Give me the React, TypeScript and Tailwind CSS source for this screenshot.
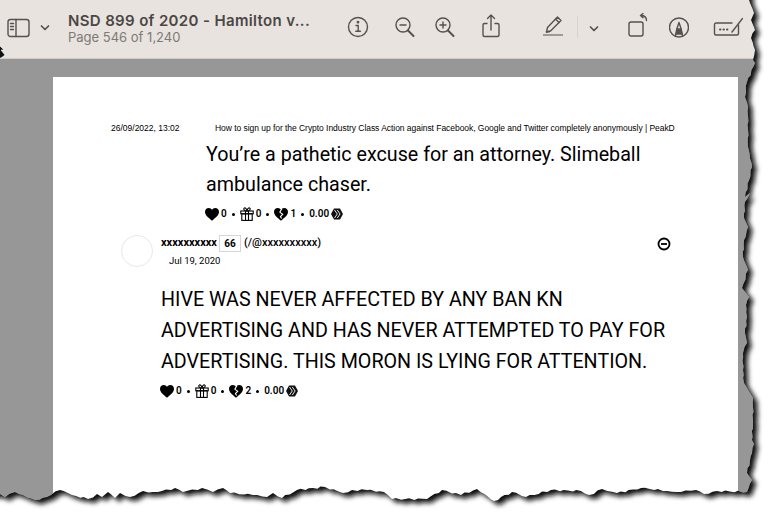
const TORN_EDGE = [
  [749, 0], [754, 13], [751, 20], [755, 30], [751, 38], [755, 50], [753, 60], [755, 63], [747, 82], [745, 97], [748, 107],
  [748, 130], [748, 147], [752, 167], [745, 197], [750, 193], [745, 202], [744, 218], [748, 227], [744, 240], [743, 257],
  [748, 270], [742, 288], [749, 297], [746, 305], [747, 317], [745, 333], [747, 343], [743, 353], [743, 370], [744, 383],
  [753, 398], [753, 420], [752, 440], [754, 444], [752, 453], [747, 473], [752, 480], [747, 492], [717, 491], [704, 494],
  [696, 490], [681, 492], [667, 491], [641, 488], [617, 493], [602, 489], [589, 495], [581, 491], [551, 490], [526, 497],
  [512, 492], [494, 501], [477, 489], [461, 495], [442, 490], [427, 499], [392, 499], [384, 492], [367, 490], [352, 490],
  [343, 493], [325, 487], [297, 490], [282, 498], [273, 493], [267, 497], [253, 495], [230, 493], [223, 488], [213, 492],
  [202, 488], [183, 492], [175, 488], [162, 491], [153, 492], [143, 491], [130, 497], [120, 493], [115, 498], [108, 492],
  [102, 497], [97, 494], [88, 499], [72, 495], [60, 490], [47, 497], [35, 500], [23, 495], [15, 492], [5, 497], [0, 494],
];

// break long segments up so the edge looks torn and not drawn with a ruler
function roughen(points: number[][]) {
  const out: string[] = [];
  points.forEach((p, i) => {
    const next = points[i + 1];
    out.push(`L${p[0]} ${p[1]}`);
    if (!next) return;
    const dist = Math.hypot(next[0] - p[0], next[1] - p[1]);
    const steps = Math.floor(dist / 4);
    for (let s = 1; s < steps; s++) {
      const t = s / steps;
      const wob = Math.sin((p[0] + p[1]) * 0.7 + s * 2.3) * 0.9;
      out.push(`L${(p[0] + (next[0] - p[0]) * t + wob * 0.6).toFixed(1)} ${(p[1] + (next[1] - p[1]) * t + wob).toFixed(1)}`);
    }
  });
  return out.join(" ");
}

const edgePath = `M-20 -20 L${TORN_EDGE[0][0]} -20 ${roughen(TORN_EDGE)} L-20 494 Z`;

function TornEdge() {
  return (
    <svg className="absolute inset-0 pointer-events-none" width="768" height="512" viewBox="0 0 768 512">
      <defs>
        <filter id="blur" x="-5%" y="-5%" width="110%" height="110%">
          <feGaussianBlur stdDeviation="2.5" />
        </filter>
        <clipPath id="outside">
          <path clipRule="evenodd" d={`M-20 -20 H800 V540 H-20 Z ${edgePath}`} />
        </clipPath>
      </defs>
      <path fillRule="evenodd" fill="#fff" d={`M-20 -20 H800 V540 H-20 Z ${edgePath}`} />
      <g clipPath="url(#outside)">
        <path d={edgePath} fill="#111" filter="url(#blur)" transform="translate(4.500 4)" />
      </g>
      <path d="M-2 44L4 50 1 50 5 55 1 58-2 58Z" fill="#111" stroke="#fff" strokeWidth=".6" />
    </svg>
  );
}

function ToolIcon({ w, className, children }: { w: number; className?: string; children: React.ReactNode }) {
  return (
    <svg
      width={w}
      height="28"
      viewBox={`0 0 ${w} 28`}
      fill="none"
      stroke="#55514f"
      strokeWidth="1.4"
      strokeLinecap="round"
      strokeLinejoin="round"
      className={className}
    >
      {children}
    </svg>
  );
}

function Toolbar() {
  return (
    <div className="h-[59px] pb-[4px] shrink-0 flex items-center bg-[#e8e3df] border-b border-[#cfcbc8]">
      <ToolIcon w={23} className="ml-[7px]">
        <rect x="1" y="6.500" width="21" height="17" rx="2.5" />
        <path d="M9 6.500v17M3.500 10.500h3M3.500 13.500h3M3.500 16.500h3" />
      </ToolIcon>
      <ToolIcon w={10} className="ml-[10px]">
        <path d="M1.500 13l3.500 3.500L8.500 13" strokeWidth="1.700" />
      </ToolIcon>
      <div className="ml-[18px] w-[270px] pt-[2px]">
        <div className="font-['Inter'] font-semibold text-[15px] leading-[18px] tracking-[0.35px] text-[#4a4745]">
          NSD 899 of 2020 - Hamilton v...
        </div>
        <div className="font-['Inter'] text-[13px] leading-[15px] text-[#7d7976]">Page 546 of 1,240</div>
      </div>
      <ToolIcon w={22} className="ml-[9px]">
        <circle cx="11" cy="14" r="9.5" />
        <path d="M9 12.500h2.200V18M8.800 18.300h4.600" />
        <circle cx="11" cy="9.200" r=".7" fill="#55514f" />
      </ToolIcon>
      <ToolIcon w={20} className="ml-[26px]">
        <circle cx="8" cy="12" r="7" />
        <path d="M13 17.500l5.500 5.500" strokeWidth="2" />
        <path d="M5 12h6" />
      </ToolIcon>
      <ToolIcon w={20} className="ml-[20px]">
        <circle cx="8" cy="12" r="7" />
        <path d="M13 17.500l5.500 5.500" strokeWidth="2" />
        <path d="M5 12h6M8 9v6" />
      </ToolIcon>
      <ToolIcon w={18} className="ml-[27px]">
        <path d="M5 10.500H2.500a1.500 1.500 0 0 0-1.500 1.500v10a1.500 1.500 0 0 0 1.500 1.500h13a1.500 1.500 0 0 0 1.500-1.500V12a1.500 1.500 0 0 0-1.500-1.500H13" />
        <path d="M9 17V2M5.500 5.500L9 2l3.500 3.500" />
      </ToolIcon>
      <ToolIcon w={20} className="ml-[43px]">
        <path d="M.5 22h19" strokeWidth="1.200" />
        <path d="M3.500 19l1-4.500L14.500 4l3.500 3.500L7.500 18z" />
        <path d="M12.500 6l3.500 3.500M3.500 19l3-.5" />
      </ToolIcon>
      <div className="ml-[14px] w-px h-[22px] bg-[#d6d2cf]" />
      <ToolIcon w={10} className="ml-[11px]">
        <path d="M1.500 14l3.500 3.500L8.500 14" strokeWidth="1.700" />
      </ToolIcon>
      <ToolIcon w={20} className="ml-[29px]">
        <rect x="1" y="9" width="14" height="14" rx="2" />
        <path d="M18.500 7.500C18.500 4.500 16.500 2.500 13 2.500M15 .5L12.500 2.500 15 4.800" />
      </ToolIcon>
      <ToolIcon w={20} className="ml-[21px]">
        <circle cx="10" cy="14.500" r="9.5" />
        <path d="M6.500 22.500l1.500-7 2-6 2 6 1.500 7" />
        <path d="M8 16h4l.8 5H7.200z" fill="#55514f" />
      </ToolIcon>
      <ToolIcon w={30} className="ml-[24px]">
        <path d="M19 10H3a1.500 1.500 0 0 0-1.500 1.500v9A1.500 1.500 0 0 0 3 22h21a1.500 1.500 0 0 0 1.500-1.500V12" />
        <path d="M19 19L29.500 5.500" />
        <path d="M7 16.500h.4M10.500 16.500h.4M14 16.500h.4" strokeWidth="2" />
      </ToolIcon>
    </div>
  );
}

const HEART = "M12 21.500C5 15.500 0 11.500 0 6.500 0 2.800 2.900 0 6.500 0 8.800 0 10.900 1.200 12 3.100 13.100 1.200 15.200 0 17.500 0 21.100 0 24 2.800 24 6.500c0 5-5 9-12 15z";

function Heart() {
  return (
    <svg width="14" height="13" viewBox="0 0 24 22" fill="#000">
      <path d={HEART} />
    </svg>
  );
}

function BrokenHeart() {
  return (
    <svg width="14" height="13" viewBox="0 0 24 22" fill="#000">
      <path d={HEART} />
      <path d="M13.500 1L10 7l5 3.500-4 4 2 3.500" fill="none" stroke="#fff" strokeWidth="1.800" />
    </svg>
  );
}

function Gift() {
  return (
    <svg width="14" height="14" viewBox="0 0 14 14" fill="none" stroke="#000" strokeWidth="1.100">
      <rect x=".8" y="4" width="12.400" height="2.800" />
      <rect x="1.800" y="6.800" width="10.400" height="6.600" />
      <path d="M5.500 4v9.400M8.500 4v9.400M7 4C5 4 3.500 3 3.800 1.700 4.200 .2 6.500 .8 7 4zm0 0c2 0 3.500-1 3.200-2.300C9.800 .2 7.500 .8 7 4z" />
    </svg>
  );
}

function HiveLogo() {
  return (
    <svg width="12" height="12" viewBox="0 0 12 12" className="ml-[2px]">
      <path d="M3 .6h6L12 6 9 11.400H3L0 6z" fill="#111" />
      <path d="M3.500 2L6.300 6 3.500 10M6.300 2L9.100 6 6.300 10" fill="none" stroke="#fff" strokeWidth=".9" />
    </svg>
  );
}

function Dot() {
  return <span className="mx-[5px] w-[3px] h-[3px] rounded-full bg-black" />;
}

function Actions({ broken, className }: { broken: number; className: string }) {
  return (
    <div className={`flex items-center text-[10px] leading-[14px] text-black ${className}`}>
      <Heart />
      <span className="ml-[2px] font-semibold">0</span>
      <Dot />
      <Gift />
      <span className="ml-[2px] font-semibold">0</span>
      <Dot />
      <BrokenHeart />
      <span className="ml-[2px] font-semibold">{broken}</span>
      <Dot />
      <span className="font-semibold">0.00</span>
      <HiveLogo />
    </div>
  );
}

function Page() {
  return (
    <div className="relative h-[460px] mx-[53px] mt-[18px] w-[685px] bg-white font-['Roboto'] text-black">
      <div className="flex pt-[46px] pl-[58px] font-['Liberation_Sans'] text-[8.5px] leading-[10px]">
        <span className="w-[104px]">26/09/2022, 13:02</span>
        <span className="tracking-[-0.045px]">
          How to sign up for the Crypto Industry Class Action against Facebook, Google and Twitter completely anonymously | PeakD
        </span>
      </div>
      <p className="ml-[153px] mt-[7px] w-[470px] text-[19.7px] leading-[30px]">
        You’re a pathetic excuse for an attorney. Slimeball ambulance chaser.
      </p>
      <Actions broken={1} className="ml-[152px] mt-[7px]" />
      <div className="flex ml-[68px] mt-[14px]">
        <div className="w-[32px] h-[32px] rounded-full border border-[#e8e8e8]" />
        <div className="ml-[8px] flex-1">
          <div className="flex items-center h-[17px] text-[11px]">
            <span className="font-bold">xxxxxxxxxx</span>
            <span className="ml-[2px] w-[22px] h-[17px] flex items-center justify-center border border-[#d5d5d5] font-bold text-[10px]">66</span>
            <span className="ml-[3px] font-medium">(/@xxxxxxxxxx)</span>
            <svg width="14" height="14" viewBox="0 0 14 14" fill="none" stroke="#000" className="ml-[336px]">
              <circle cx="7" cy="7" r="5.500" strokeWidth="1.800" />
              <path d="M4 7h6" strokeWidth="1.800" />
            </svg>
          </div>
          <div className="ml-[8px] mt-[2px] text-[9.5px] leading-[14px]">Jul 19, 2020</div>
        </div>
      </div>
      <p className="ml-[108px] mt-[16px] w-[515px] text-[19.7px] leading-[31px]">
        HIVE WAS NEVER AFFECTED BY ANY BAN KN ADVERTISING AND HAS NEVER ATTEMPTED TO PAY FOR ADVERTISING. THIS MORON IS LYING FOR ATTENTION.
      </p>
      <Actions broken={2} className="ml-[107px] mt-[7px]" />
    </div>
  );
}

export default function App() {
  return (
    <div className="relative w-[768px] h-[512px] overflow-hidden bg-[#979797]">
      <Toolbar />
      <Page />
      <TornEdge />
    </div>
  );
}
